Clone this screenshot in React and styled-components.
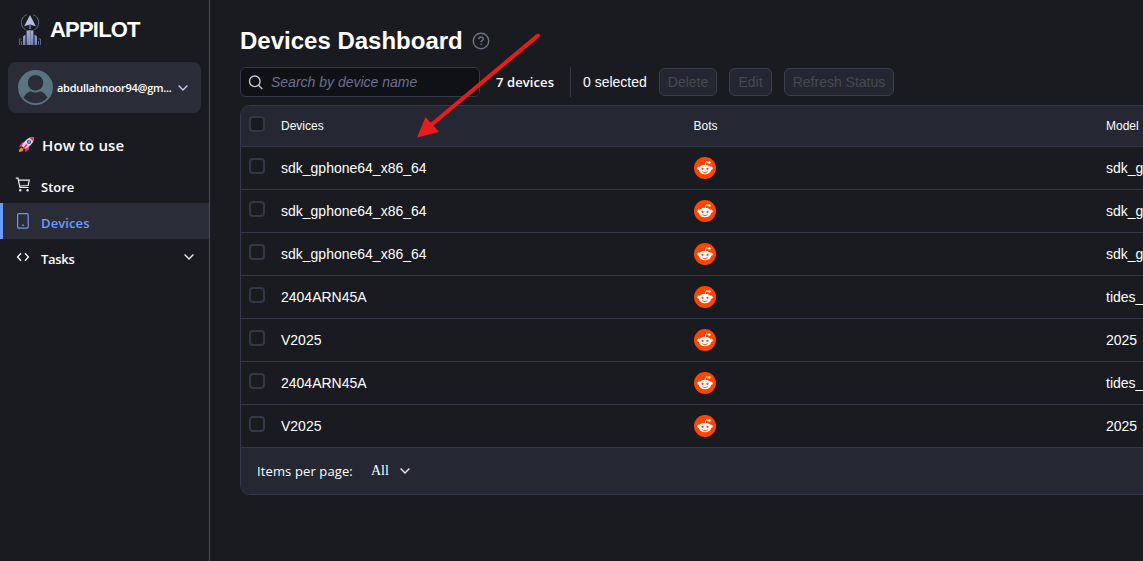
import React from 'react';
import styled, { createGlobalStyle, css } from 'styled-components';

const SANS = '"Liberation Sans", Arial, sans-serif';
const UI = '"Open Sans", "Noto Sans", sans-serif';
const LINE = '#363849';
const PANEL = '#252733';

const GlobalStyle = createGlobalStyle`
  *, *::before, *::after { box-sizing: border-box; }
  body { margin: 0; background: #1a1b20; color: #fff; font-family: ${SANS}; overflow: hidden; }
  svg { display: block; flex: none; }
`;

const Page = styled.div`
  display: flex;
  width: 100vw;
  height: 100vh;
  overflow: hidden;
  position: relative;
`;

const Sidebar = styled.aside`
  width: 210px;
  flex: none;
  border-right: 1px solid #4b4c52;
`;

const Brand = styled.div`
  display: flex;
  align-items: center;
  gap: 8px;
  height: 62px;
  padding: 0 0 3px 18px;
  font: bold 22px ${SANS};
  letter-spacing: -0.8px;
`;

const UserCard = styled.div`
  display: flex;
  align-items: center;
  height: 51px;
  margin: 0 8px;
  padding: 0 13px 0 10px;
  border-radius: 8px;
  background: #2a2c38;
`;

const Email = styled.span`
  flex: 1;
  margin-left: 4px;
  white-space: nowrap;
  font: 600 11px/16px ${UI};
  letter-spacing: -0.27px;
`;

const HowTo = styled.div`
  display: flex;
  align-items: center;
  gap: 7px;
  height: 54px;
  padding: 9px 0 0 18px;
  font: 600 15px/20px ${UI};
  letter-spacing: 0.12px;
`;

const NavItem = styled.div`
  display: flex;
  align-items: center;
  height: 36px;
  padding: 4px 15px 0 ${(p) => (p.$active ? 12 : 15)}px;
  font: 600 13px/18px ${UI};
  ${(p) =>
    p.$active &&
    css`
      background: #2a2c38;
      border-left: 3px solid #6c9bff;
      color: #6f9bff;
    `}
`;

const NavIcon = styled.span`
  display: flex;
  width: 26px;
  padding-bottom: 4px;
`;

const NavLabel = styled.span`
  flex: 1;
  letter-spacing: ${(p) => p.$spacing || 0}px;
`;

const NavChevron = styled.span`
  padding-bottom: 4px;
`;

const Main = styled.main`
  flex: 1;
  min-width: 0;
  padding: 24px 0 0 30px;
`;

const TitleRow = styled.div`
  display: flex;
  align-items: center;
  gap: 9px;
  height: 34px;
`;

const Title = styled.h1`
  margin: 0;
  font: bold 24px/34px ${SANS};
`;

const Toolbar = styled.div`
  display: flex;
  align-items: center;
  height: 30px;
  margin: 9px 0 8px;
  font-size: 14px;
  white-space: nowrap;
`;

const Search = styled.div`
  display: flex;
  align-items: center;
  gap: 8px;
  width: 240px;
  height: 30px;
  padding-left: 7px;
  border: 1px solid ${LINE};
  border-radius: 6px;
  background: #101114;
  color: #68708c;
  font-style: italic;
`;

const Count = styled.span`
  width: 74px;
  margin-left: 16px;
  font: 600 13px/18px ${UI};
  letter-spacing: 0.1px;
`;

const Selected = styled.span`
  width: 89px;
  height: 30px;
  padding-left: 12px;
  border-left: 1px solid ${LINE};
  line-height: 30px;
`;

const ToolButton = styled.button`
  width: ${(p) => p.$width}px;
  height: 28px;
  margin-right: 12px;
  padding: 0;
  border: 1px solid #3d3f4f;
  border-radius: 6px;
  background: #242631;
  color: #474953;
  font: 14px ${SANS};
`;

const Table = styled.section`
  width: 1200px;
  border: 1px solid ${LINE};
  border-radius: 10px;
  overflow: hidden;
`;

const Row = styled.div`
  display: grid;
  grid-template-columns: 40px 412.5px 412.5px 1fr;
  align-items: center;
  height: ${(p) => (p.$head ? 41 : 43)}px;
  border-bottom: 1px solid ${LINE};
  background: ${(p) => (p.$head ? PANEL : 'transparent')};
  font-size: ${(p) => (p.$head ? 12 : 14)}px;
`;

const Checkbox = styled.span`
  width: 16px;
  height: 16px;
  margin: 0 0 4px 8px;
  border: 2px solid #343746;
  border-radius: 4px;
  background: #1a1b20;
`;

const Footer = styled.footer`
  display: flex;
  align-items: center;
  height: 46px;
  padding-left: 16px;
  background: ${PANEL};
`;

const FooterLabel = styled.span`
  width: 114px;
  font: 13px/18px ${UI};
  letter-spacing: 0.12px;
`;

const FooterSelect = styled.span`
  display: flex;
  align-items: center;
  gap: 11px;
  font: 14px/18px "Liberation Serif", serif;
`;

const Pointer = styled.svg`
  position: absolute;
  left: 410px;
  top: 28px;
`;

const Chevron = ({ color = '#e8e8ee' }) => (
  <svg width="10" height="6" viewBox="0 0 10 6" fill="none" stroke={color} strokeWidth="1.4">
    <path d="M.6.6 5 5 9.4.6" />
  </svg>
);

const Logo = () => (
  <svg width="24" height="32" viewBox="0 0 24 32" fill="none">
    <defs>
      <linearGradient id="bars" x1="0" y1="0" x2="0" y2="1">
        <stop offset="0" stopColor="#a9b3dc" />
        <stop offset="1" stopColor="#7180bd" />
      </linearGradient>
    </defs>
    <path d="M9 .8C5 2 3.400 5.400 3.400 8.600c0 3.200 1.600 6 4.200 7.200M15 .8c4 1.200 5.600 4.600 5.600 7.800 0 3.200-1.600 6-4.200 7.200" stroke="#666e8c" />
    <path d="M12 1 6.200 12.200 12 10.500l5.800 1.700z" fill="#b9bfe0" />
    <path d="M12 10.500V15" stroke="#7582b4" strokeWidth="1.500" />
    <path d="M8.600 31V16.500h2.800V31zM12.600 31V16.500h2.800V31zM5 31V22.500l2.500-2V31zM16.500 31V20.500l2.500 2V31z" fill="url(#bars)" />
    <path d="M11.900 31V16" stroke="#c6cbea" />
    <path d="M1.500 31v-6h2M3.500 31v-4M20.500 31v-4M22.500 31v-6h-2" stroke="#5c6490" />
  </svg>
);

const Avatar = () => (
  <svg width="35" height="35" viewBox="0 0 35 35">
    <circle cx="17.500" cy="17.500" r="17.500" fill="#587480" />
    <path d="M5.500 27.500C8 23 12 20.500 17.500 20.500S27 23 29.500 27.500A15.600 15.600 0 0 1 5.500 27.500z" fill="#2a2c38" />
    <circle cx="17.500" cy="13.200" r="9.400" fill="#587480" />
    <circle cx="17.500" cy="12.800" r="7.700" fill="#2a2c38" />
  </svg>
);

const Rocket = () => (
  <svg width="17" height="17" viewBox="0 0 17 17">
    <path d="M7 5.500 3.500 7 1 11l3.800-.5zM11.500 9.500l-.5 4-4 2.800.5-4z" fill="#e8376f" />
    <path d="M16 1C11 .8 7 3.500 3.800 10l3 3C13 10 16.200 6 16 1z" fill="#dcd6e4" />
    <path d="M16 1c-1.800 0-3.200.2-4.600.8L15.200 5.600c.6-1.400.8-2.800.8-4.600zM8.200 8 4.800 12.200l1 .8 4-4z" fill="#e8376f" />
    <circle cx="11" cy="6" r="2.100" fill="#285ea8" />
    <circle cx="11" cy="6" r="1.100" fill="#58b7ec" />
    <path d="M3.500 11.500C1.500 12 1 14 .9 16c2.100-.2 4.100-.6 4.600-2.500z" fill="#f58a1f" />
  </svg>
);

const Cart = () => (
  <svg width="16" height="16" viewBox="0 0 16 16" fill="none" stroke="#f2f2f5" strokeWidth="1.200">
    <path d="M.8 1.200h2.200l1.900 9.300h8.600M3.300 3.200h10.900l-1 5.300-8.700.5" />
    <circle cx="5.300" cy="13.200" r=".6" fill="#fff" />
    <circle cx="12.600" cy="13.200" r=".6" fill="#fff" />
  </svg>
);

const Phone = () => (
  <svg width="16" height="16" viewBox="0 0 16 16" fill="none" stroke="#6c9bdf" strokeWidth="1.200">
    <rect x="2.600" y=".7" width="10.600" height="14.400" rx="1.400" />
    <path d="M7.200 12.200h1.600" strokeWidth="1.400" />
  </svg>
);

const Code = () => (
  <svg width="16" height="10" viewBox="0 0 16 10" fill="none" stroke="#f2f2f5" strokeWidth="1.400">
    <path d="M6 1.200 2.600 5 6 8.800M10 1.200 13.400 5 10 8.800" />
  </svg>
);

const Help = () => (
  <svg width="18" height="18" viewBox="0 0 18 18" fill="none" stroke="#6d7187" strokeWidth="1.400">
    <circle cx="9" cy="9" r="7.700" />
    <path d="M6.700 7.200c0-1.400 1-2.200 2.300-2.200s2.300.8 2.300 2c0 1.500-2.300 1.700-2.300 3.200M9 11.700v1.400" />
  </svg>
);

const Magnifier = () => (
  <svg width="15" height="15" viewBox="0 0 15 15" fill="none" stroke="#c3c6dc" strokeWidth="1.400">
    <circle cx="6.800" cy="6.300" r="5.300" />
    <path d="m10.500 10.300 3.800 3.800" />
  </svg>
);

const Reddit = () => (
  <svg width="23" height="23" viewBox="0.500 0.500 23 23">
    <circle cx="11.500" cy="11.500" r="11" fill="#ff4500" />
    <ellipse cx="11.500" cy="13" rx="6.200" ry="4.800" fill="#fff" />
    <circle cx="5.400" cy="11.700" r="1.600" fill="#fff" />
    <circle cx="17.600" cy="11.700" r="1.600" fill="#fff" />
    <path d="m11.700 9 .9-3.700 3.200.7" fill="none" stroke="#fff" strokeWidth=".8" />
    <circle cx="16" cy="6" r="1.200" fill="#fff" />
    <circle cx="9" cy="12.300" r="1.150" fill="#ff4500" />
    <circle cx="14" cy="12.300" r="1.150" fill="#ff4500" />
    <path d="M8.900 15.200c1.500 1.100 3.700 1.100 5.200 0" fill="none" stroke="#ff4500" strokeWidth=".9" />
  </svg>
);

const devices = [
  ['sdk_gphone64_x86_64', 'sdk_gphone64_x86_64'],
  ['sdk_gphone64_x86_64', 'sdk_gphone64_x86_64'],
  ['sdk_gphone64_x86_64', 'sdk_gphone64_x86_64'],
  ['2404ARN45A', 'tides_global'],
  ['V2025', '2025'],
  ['2404ARN45A', 'tides_global'],
  ['V2025', '2025'],
];

export default function App() {
  return (
    <Page>
      <GlobalStyle />
      <Sidebar>
        <Brand><Logo />APPILOT</Brand>
        <UserCard>
          <Avatar />
          <Email>abdullahnoor94@gm...</Email>
          <Chevron color="#c9cce6" />
        </UserCard>
        <HowTo><Rocket />How to use</HowTo>
        <NavItem><NavIcon><Cart /></NavIcon><NavLabel>Store</NavLabel></NavItem>
        <NavItem $active><NavIcon><Phone /></NavIcon><NavLabel $spacing={0.1}>Devices</NavLabel></NavItem>
        <NavItem><NavIcon><Code /></NavIcon><NavLabel $spacing={-0.3}>Tasks</NavLabel><NavChevron><Chevron /></NavChevron></NavItem>
      </Sidebar>
      <Main>
        <TitleRow><Title>Devices Dashboard</Title><Help /></TitleRow>
        <Toolbar>
          <Search><Magnifier />Search by device name</Search>
          <Count>7 devices</Count>
          <Selected>0 selected</Selected>
          <ToolButton $width={58}>Delete</ToolButton>
          <ToolButton $width={43}>Edit</ToolButton>
          <ToolButton $width={110}>Refresh Status</ToolButton>
        </Toolbar>
        <Table>
          <Row $head><Checkbox /><span>Devices</span><span>Bots</span><span>Model</span></Row>
          {devices.map(([name, model], i) => (
            <Row key={i}><Checkbox /><span>{name}</span><Reddit /><span>{model}</span></Row>
          ))}
          <Footer>
            <FooterLabel>Items per page:</FooterLabel>
            <FooterSelect>All<Chevron /></FooterSelect>
          </Footer>
        </Table>
      </Main>
      <Pointer width="134" height="112" viewBox="0 0 134 112">
        <path d="M128 7.500 20 98" stroke="#e81c1c" strokeWidth="4" strokeLinecap="round" />
        <path d="M7 109.500 15.500 89 29 104z" fill="#e81c1c" />
      </Pointer>
    </Page>
  );
}
